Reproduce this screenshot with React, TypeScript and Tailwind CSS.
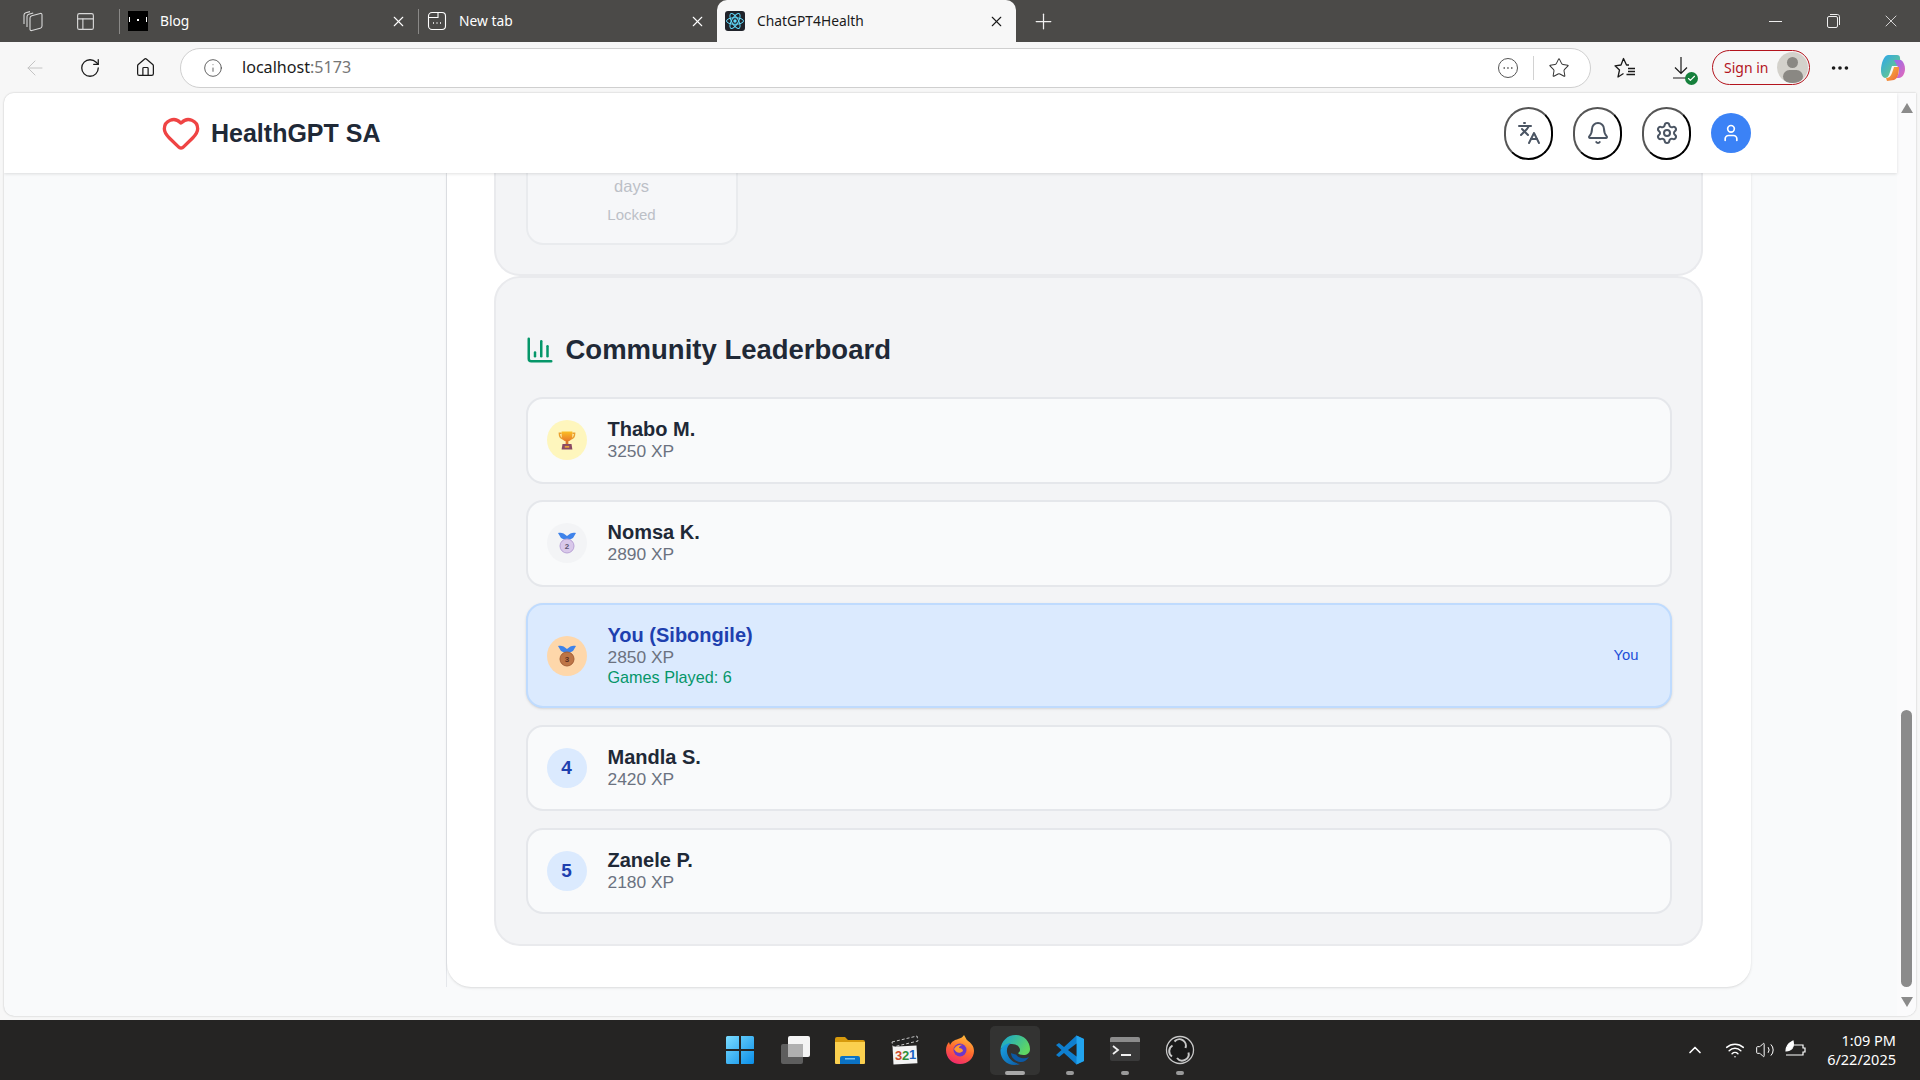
import React from "react";
import {
  ArrowLeft,
  Bell,
  ChartColumn,
  Check,
  ChevronUp,
  Ellipsis,
  Heart,
  Home,
  Info,
  Languages,
  PanelsTopLeft,
  Plus,
  RotateCw,
  Settings,
  Star,
  User,
  Volume2,
  Wifi,
  X,
} from "lucide-react";

interface LeaderRow {
  name: string;
  xp: number;
  badge: React.ReactNode;
  badgeBg: string;
  isYou?: boolean;
  games?: number;
}

function Trophy() {
  return (
    <svg width="18" height="21" viewBox="0 0 20 22">
      <defs>
        <linearGradient id="cup" x1="0" y1="0" x2="0" y2="1">
          <stop offset="0" stopColor="#fbbf24" />
          <stop offset="1" stopColor="#e8792b" />
        </linearGradient>
      </defs>
      <path d="M4 3H1.500C1.500 7 3 9 6 9.500M16 3h2.500C18.500 7 17 9 14 9.500" fill="none" stroke="#eaa02f" strokeWidth="1.600" />
      <path d="M4 1h12v5c0 4-3 6-6 6S4 10 4 6z" fill="url(#cup)" />
      <rect x="8.500" y="11" width="3" height="4" fill="#d9772b" />
      <path d="M5 15h10l1 6H4z" fill="#8a4a63" />
      <rect x="7.500" y="17" width="5" height="2" fill="#e8a13a" />
    </svg>
  );
}

function Medal({ fill, ring, digit, text }: { fill: string; ring: string; digit: string; text: string }) {
  return (
    <svg width="20" height="24" viewBox="0 0 20 24">
      <path d="M1 2c3-1 6 0 9 3 3-3 6-4 9-3l-3 5-6 3-6-3z" fill="#3f83ea" />
      <circle cx="10" cy="15" r="7" fill={fill} stroke={ring} strokeWidth="1" />
      <text x="10" y="18" textAnchor="middle" fontSize="8" fontWeight="700" fill={text}>
        {digit}
      </text>
    </svg>
  );
}

const rows: LeaderRow[] = [
  { name: "Thabo M.", xp: 3250, badge: <Trophy />, badgeBg: "bg-[#fef6bd]" },
  {
    name: "Nomsa K.",
    xp: 2890,
    badge: <Medal fill="#d9c8ea" ring="#b9a3d6" digit="2" text="#5b5470" />,
    badgeBg: "bg-[#f3f4f6]",
  },
  {
    name: "You (Sibongile)",
    xp: 2850,
    badge: <Medal fill="#bd7547" ring="#a55f36" digit="3" text="#5a2f22" />,
    badgeBg: "bg-[#fed7aa]",
    isYou: true,
    games: 6,
  },
  {
    name: "Mandla S.",
    xp: 2420,
    badge: <span className="text-[19px] font-bold text-[#1e40af]">4</span>,
    badgeBg: "bg-[#dbeafe]",
  },
  {
    name: "Zanele P.",
    xp: 2180,
    badge: <span className="text-[19px] font-bold text-[#1e40af]">5</span>,
    badgeBg: "bg-[#dbeafe]",
  },
];

function BrowserTab({
  icon,
  label,
  active,
}: {
  icon: React.ReactNode;
  label: string;
  active?: boolean;
}) {
  return (
    <div
      className={
        active
          ? "flex h-[48px] w-[299px] items-center self-start rounded-t-[10px] bg-[#f7f7f7] pb-[6px] pl-[8px] pr-[11px] text-[#1a1a1a]"
          : "flex h-[42px] w-[299px] items-center pr-[11px] text-white"
      }
    >
      {!active && <span className="mr-[8px] h-[25px] w-[1px] bg-[#8a8987]" />}
      {icon}
      <span className="ml-[12px] flex-1 text-[13.8px]">{label}</span>
      <X size={17} strokeWidth={1.5} />
    </div>
  );
}

function TabBar() {
  return (
    <div className="flex h-[42px] shrink-0 items-start bg-[#4b4a48]">
      <div className="flex h-[42px] w-[59px] items-center justify-center pl-[6px] text-[#d8d8d8]">
        <svg width="22" height="24" viewBox="0 0 22 24" fill="none" stroke="currentColor" strokeWidth="1.100">
          <path d="M2 15V6c0-1.200.7-2 1.800-2.300L8 2.600" />
          <path d="M5 18V7.500c0-1.200.7-2 1.800-2.300l4.400-1.200" />
          <path d="M8 9c0-1.200.7-2 1.800-2.300l8.400-2.200C19.300 4.200 20 4.800 20 6v11c0 1.200-.7 2-1.800 2.300l-8.400 2.200C8.700 21.800 8 21.200 8 20z" />
        </svg>
      </div>
      <div className="flex h-[42px] w-[52px] items-center justify-center text-[#d8d8d8]">
        <PanelsTopLeft size={21} strokeWidth={1.3} />
      </div>
      <div className="w-[8px]" />
      <BrowserTab
        label="Blog"
        icon={
          <div className="flex h-[20px] w-[20px] items-start justify-between bg-black px-[1px] pt-[6px]">
            <span className="h-[5px] w-[1px] bg-white" />
            <span className="mt-[2px] h-[2px] w-[2px] bg-white" />
            <span className="h-[5px] w-[1px] bg-white" />
          </div>
        }
      />
      <BrowserTab
        label="New tab"
        icon={
          <svg width="20" height="20" viewBox="0 0 20 20" fill="none" stroke="currentColor" strokeWidth="1.100">
            <rect x="1.500" y="1.500" width="17" height="17" rx="3.500" />
            <path d="M1.500 6.500h9.500V1.500" />
            <path d="M6 12h1M9.500 12h1M13 12h1" strokeWidth="1.500" />
          </svg>
        }
      />
      <BrowserTab
        active
        label="ChatGPT4Health"
        icon={
          <svg width="20" height="20" viewBox="0 0 20 20" className="rounded-[3px] bg-[#20232a]">
            <g fill="none" stroke="#61dafb" strokeWidth="1">
              <ellipse cx="10" cy="10" rx="8.500" ry="3.300" />
              <ellipse cx="10" cy="10" rx="8.500" ry="3.300" transform="rotate(60 10 10)" />
              <ellipse cx="10" cy="10" rx="8.500" ry="3.300" transform="rotate(120 10 10)" />
            </g>
            <circle cx="10" cy="10" r="1.700" fill="#61dafb" />
          </svg>
        }
      />
      <div className="flex h-[42px] w-[54px] items-center justify-center text-[#f0f0f0]">
        <Plus size={25} strokeWidth={1.2} />
      </div>
      <div className="ml-auto flex h-[42px] text-[#eeeeee]">
        <div className="flex w-[58px] items-center justify-center">
          <span className="h-[1px] w-[13px] bg-[#eeeeee]" />
        </div>
        <div className="flex w-[58px] items-center justify-center">
          <svg width="13" height="14" viewBox="0 0 13 14" fill="none" stroke="currentColor" strokeWidth="1">
            <rect x="0.500" y="2.500" width="10" height="11" rx="1.500" />
            <path d="M3 .500h7.500c1 0 2 1 2 2V11" />
          </svg>
        </div>
        <div className="flex w-[58px] items-center justify-center">
          <X size={20} strokeWidth={1} />
        </div>
      </div>
    </div>
  );
}

function Toolbar() {
  return (
    <div className="flex h-[51px] shrink-0 items-center bg-[#f7f7f7] text-[#1a1a1a]">
      <div className="flex w-[180px] items-center pl-[23px]">
        <ArrowLeft size={24} strokeWidth={1} className="text-[#c4c4c4]" />
        <RotateCw size={22} strokeWidth={1.4} className="ml-[32px]" />
        <Home size={21} strokeWidth={1.4} className="ml-[34px]" />
      </div>
      <div className="flex h-[40px] w-[1411px] items-center rounded-full border border-[#cfcfcf] bg-white pl-[22px] pr-[20px]">
        <Info size={20} strokeWidth={1} className="text-[#444]" />
        <span className="ml-[19px] text-[16.100px]">
          localhost<span className="text-[#767676]">:5173</span>
        </span>
        <svg width="22" height="22" viewBox="0 0 22 22" fill="none" stroke="#555" strokeWidth="1" className="ml-auto">
          <circle cx="11" cy="11" r="9.500" />
          <path d="M6.500 11h1.500M10.200 11h1.500M14 11h1.500" strokeWidth="1.500" />
        </svg>
        <span className="mx-[14px] h-[24px] w-[1px] bg-[#d2d2d2]" />
        <Star size={22} strokeWidth={1.1} className="text-[#333]" />
      </div>
      <svg width="24" height="24" viewBox="0 0 24 24" fill="none" stroke="#1a1a1a" strokeWidth="1.300" className="ml-[22px]">
        <path d="M16 9 13.500 9 10.500 2.500 8 9 2 9.800 6.500 14 5 21l5.500-3.500" strokeLinejoin="round" />
        <path d="M15 12.500h7M15 15.500h7M13.500 18.500h8.500" />
      </svg>
      <div className="relative ml-[32px] text-[#1a1a1a]">
        <svg width="24" height="26" viewBox="0 0 24 26" fill="none" stroke="currentColor" strokeWidth="1.200">
          <path d="M12 2v16M6 12.500l6 6 6-6M4 23h16" />
        </svg>
        <div className="absolute bottom-[-4px] right-[-5px] flex h-[13px] w-[13px] items-center justify-center rounded-full bg-[#16803c]">
          <Check size={9} strokeWidth={3} className="text-white" />
        </div>
      </div>
      <div className="ml-[19px] flex h-[35px] w-[98px] items-center justify-between rounded-full border border-[#b3141d] pl-[11px] pr-[1px]">
        <span className="text-[14px] text-[#b3141d]">Sign in</span>
        <div className="flex h-[31px] w-[31px] flex-col items-center overflow-hidden rounded-full bg-[#d3d1cb]">
          <span className="mt-[5px] h-[12px] w-[11px] rounded-full bg-[#8a8883]" />
          <span className="mt-[2px] h-[14px] w-[20px] rounded-full bg-[#8a8883]" />
        </div>
      </div>
      <Ellipsis size={22} strokeWidth={2} className="ml-[19px]" />
      <svg width="26" height="28" viewBox="0 0 26 28" className="ml-[29px]">
        <defs>
          <linearGradient id="copA" x1="0" y1="0" x2="1" y2="1">
            <stop offset="0" stopColor="#2aa6f0" />
            <stop offset="1" stopColor="#7dd36a" />
          </linearGradient>
          <linearGradient id="copB" x1="0" y1="0" x2="1" y2="1">
            <stop offset="0" stopColor="#8f6bf0" />
            <stop offset="1" stopColor="#e769b8" />
          </linearGradient>
          <linearGradient id="copC" x1="0" y1="0" x2="1" y2="1">
            <stop offset="0" stopColor="#f5c33b" />
            <stop offset="1" stopColor="#f0603c" />
          </linearGradient>
        </defs>
        <path d="M8 1h9c2 0 3 1 3 3l1 8H12L9 21c-1 2-2 3-4 3-3-1-4-4-4-8 0-6 3-15 7-15z" fill="url(#copA)" />
        <path d="M14 6h7c3 2 4 6 4 9 0 5-3 9-6 9h-3c2-2 3-5 3-9z" fill="url(#copB)" />
        <path d="M6 24c3 0 5-2 6-5l2-6h5c0 5-1 12-5 13l-7 1z" fill="url(#copC)" />
      </svg>
    </div>
  );
}

function CircleButton({ children }: { children: React.ReactNode }) {
  return (
    <button className="flex h-[53px] w-[49px] items-center justify-center rounded-full border-2 border-b-black border-l-[#555] border-r-black border-t-[#555] text-[#4b5563]">
      {children}
    </button>
  );
}

function AppHeader() {
  return (
    <header className="z-10 flex h-[80px] shrink-0 items-center justify-between bg-white pl-[157px] pr-[146px] shadow-[0_1px_3px_rgba(0,0,0,0.12)]">
      <div className="flex items-center">
        <Heart size={40} strokeWidth={2} className="text-[#ef4444]" />
        <h1 className="ml-[10px] mt-[1px] text-[25px] font-bold text-[#1f2937]">HealthGPT SA</h1>
      </div>
      <div className="flex items-center gap-[20px]">
        <CircleButton>
          <Languages size={24} strokeWidth={2} />
        </CircleButton>
        <CircleButton>
          <Bell size={24} strokeWidth={2} />
        </CircleButton>
        <CircleButton>
          <Settings size={24} strokeWidth={2} />
        </CircleButton>
        <div className="flex h-[40px] w-[40px] items-center justify-center rounded-full bg-[#3b82f6] text-white">
          <User size={20} strokeWidth={2} />
        </div>
      </div>
    </header>
  );
}

function Leaderboard() {
  return (
    <section className="rounded-[26px] border-2 border-[#e9eaed] bg-[#f3f4f6] px-[29.500px] pb-[30px] pt-[54px]">
      <div className="flex h-[36px] items-center">
        <ChartColumn size={30} strokeWidth={2} className="ml-[-1px] text-[#059669]" />
        <h2 className="ml-[11px] text-[27.5px] font-bold text-[#1f2937]">Community Leaderboard</h2>
      </div>
      <div className="mt-[29px] flex flex-col gap-[16.5px]">
        {rows.map((row) => (
          <div
            key={row.name}
            className={
              row.isYou
                ? "flex items-center rounded-[17px] border-2 border-[#bfdbfe] bg-[#dbeafe] py-[19px] pl-[19px] pr-[31px] shadow-sm"
                : "flex items-center rounded-[17px] border-2 border-[#e5e7eb] bg-[#f9fafb] py-[19.25px] pl-[19px] pr-[31px]"
            }
          >
            <div className={"flex h-[40px] w-[40px] shrink-0 items-center justify-center rounded-full " + row.badgeBg}>
              {row.badge}
            </div>
            <div className="ml-[21px] flex-1">
              <p className={row.isYou ? "text-[20px] font-bold leading-[22px] text-[#1e40af]" : "text-[20px] font-bold leading-[22px] text-[#1f2937]"}>
                {row.name}
              </p>
              <p className="text-[17.4px] leading-[22px] text-[#6b7280]">{row.xp} XP</p>
              {row.games && (
                <p className="text-[16.2px] leading-[19px] text-[#059669]">Games Played: {row.games}</p>
              )}
            </div>
            {row.isYou && <span className="text-[14.8px] text-[#1d4ed8]">You</span>}
          </div>
        ))}
      </div>
    </section>
  );
}

function Scrollbar() {
  return (
    <div className="flex w-[19px] shrink-0 flex-col items-center bg-[#fbfbfc] text-[#8b8b8b]">
      <svg width="12" height="10" viewBox="0 0 12 10" className="mt-[10px]" fill="currentColor">
        <path d="M6 0l6 10H0z" />
      </svg>
      <div className="mt-[597px] h-[277px] w-[11px] rounded-full bg-[#8b8b8b]" />
      <svg width="12" height="10" viewBox="0 0 12 10" className="mt-[10px]" fill="currentColor">
        <path d="M0 0h12L6 10z" />
      </svg>
    </div>
  );
}

function Page() {
  return (
    <div className="flex flex-1 bg-[#f7f7f7] px-[4px] pb-[4px]">
      <div className="flex flex-1 overflow-hidden rounded-b-[10px] rounded-tl-[10px] bg-[#f9fafb] shadow-[0_0_2px_rgba(0,0,0,0.25)]">
        <div className="flex flex-1 flex-col">
          <AppHeader />
          <div className="flex items-stretch">
            <div className="w-[443px] shrink-0 border-r border-[#e5e7eb]" />
            <main className="w-[1304px] rounded-b-[24px] bg-white pb-[41px] pl-[47px] pr-[48px] shadow-sm">
              <section className="h-[103px] rounded-b-[26px] border-x-2 border-b-2 border-[#e9eaed] bg-[#f3f4f6] px-[29.500px]">
                <div className="flex h-[72px] w-[212px] flex-col items-center rounded-b-[17px] border-x-2 border-b-2 border-[#e9ebee] bg-[#f6f7f9] text-[#bcc0c7]">
                  <span className="text-[16.500px] leading-[26px]">days</span>
                  <span className="mt-[6px] text-[15px] leading-[20px]">Locked</span>
                </div>
              </section>
              <Leaderboard />
            </main>
          </div>
        </div>
        <Scrollbar />
      </div>
    </div>
  );
}

function TaskIcon({ children, active, dot }: { children: React.ReactNode; active?: boolean; dot?: boolean }) {
  return (
    <div className="flex h-[60px] w-[55px] flex-col items-center justify-center">
      <div
        className={
          active
            ? "flex h-[49px] w-[50px] flex-col items-center rounded-[5px] bg-[#333332]"
            : "flex h-[49px] w-[50px] flex-col items-center"
        }
      >
        <div className="mt-[8px] flex h-[32px] items-center">{children}</div>
        {active && <span className="mt-[5px] h-[4px] w-[20px] rounded-full bg-[#a8a8a8]" />}
        {dot && <span className="mt-[5px] h-[4px] w-[8px] rounded-full bg-[#9a9a9a]" />}
      </div>
    </div>
  );
}

function Taskbar() {
  return (
    <div className="grid h-[60px] shrink-0 grid-cols-[1fr_auto_1fr] bg-[#252423] font-['Noto_Sans',sans-serif]">
      <div />
      <div className="flex">
        <TaskIcon>
          <svg width="30" height="30" viewBox="0 0 30 30">
            <defs>
              <linearGradient id="win" x1="0" y1="0" x2="1" y2="1">
                <stop offset="0" stopColor="#7bdcff" />
                <stop offset="1" stopColor="#0a8ee8" />
              </linearGradient>
            </defs>
            <path d="M1 2.500A1.500 1.500 0 0 1 2.500 1H14v13H1zM16 1h11.500A1.500 1.500 0 0 1 29 2.500V14H16zM1 16h13v13H2.500A1.500 1.500 0 0 1 1 27.500zM16 16h13v11.500a1.500 1.500 0 0 1-1.500 1.500H16z" fill="url(#win)" />
          </svg>
        </TaskIcon>
        <TaskIcon>
          <svg width="30" height="30" viewBox="0 0 30 30">
            <rect x="1" y="9" width="22" height="20" rx="2" fill="#5e5e5e" />
            <rect x="8" y="1" width="22" height="21" rx="2" fill="#f4f4f4" />
            <rect x="8" y="9" width="15" height="13" fill="#b0b0b0" />
          </svg>
        </TaskIcon>
        <TaskIcon>
          <svg width="30" height="30" viewBox="0 0 30 30">
            <path d="M0 4a2 2 0 0 1 2-2h8l3 3h15a2 2 0 0 1 2 2v4H0z" fill="#d79a0d" />
            <path d="M0 7h30v21a1 1 0 0 1-1 1H1a1 1 0 0 1-1-1z" fill="#fbd04f" />
            <path d="M5 29v-6a2 2 0 0 1 2-2h16a2 2 0 0 1 2 2v6z" fill="#0b72c4" />
            <rect x="10" y="23" width="10" height="1.500" fill="#7fc4f0" />
          </svg>
        </TaskIcon>
        <TaskIcon>
          <svg width="28" height="30" viewBox="0 0 28 30">
            <path d="M1 7 26 1l1 5L2 12z" fill="#222" stroke="#eee" strokeWidth="0.800" strokeDasharray="3 2" />
            <rect x="2" y="11" width="24" height="18" fill="#f4f4f4" transform="rotate(-3 14 20)" />
            <text x="4" y="25" fontSize="13" fontWeight="700" fill="#d14b2a" fontFamily="Liberation Sans">3</text>
            <text x="11" y="25" fontSize="13" fontWeight="700" fill="#2f8f3a" fontFamily="Liberation Sans">2</text>
            <text x="18" y="24" fontSize="13" fontWeight="700" fill="#1b64c4" fontFamily="Liberation Sans">1</text>
          </svg>
        </TaskIcon>
        <TaskIcon>
          <svg width="30" height="30" viewBox="0 0 30 30">
            <defs>
              <linearGradient id="fx" x1="0.700" y1="0" x2="0.300" y2="1">
                <stop offset="0" stopColor="#ffbd3a" />
                <stop offset="0.500" stopColor="#ff6a2e" />
                <stop offset="1" stopColor="#f0266f" />
              </linearGradient>
            </defs>
            <path d="M19 0c2 3 2 4 3 5 4 3 7 6 7 11 0 7-6 13-14 13S1 23 1 15c0-3 1-6 3-8l1 3c2-4 5-5 8-6 3-1 5-2 6-4z" fill="url(#fx)" />
            <circle cx="15" cy="15" r="6.500" fill="#6c37c9" />
            <path d="M9 14c2-4 6-5 9-4-3 0-4 2-4 3 2 0 4 1 4 3-3 3-7 2-9-2z" fill="#ff9a2e" />
          </svg>
        </TaskIcon>
        <TaskIcon active>
          <svg width="30" height="30" viewBox="0 0 30 30">
            <defs>
              <linearGradient id="eg1" x1="0" y1="0" x2="1" y2="0.500">
                <stop offset="0" stopColor="#12a0d8" />
                <stop offset="1" stopColor="#5fd663" />
              </linearGradient>
              <linearGradient id="eg2" x1="0" y1="0" x2="1" y2="1">
                <stop offset="0" stopColor="#1aa6e4" />
                <stop offset="1" stopColor="#0c5aa6" />
              </linearGradient>
            </defs>
            <path d="M0.500 15C1 6 7.500 0 15.500 0 24 0 30 6.500 30 14c0 4-3 6-6.500 6-3 0-5-1-5.500-2 2-1 2.500-3 1.500-5-1.500-3-5-4.500-9-4-4 .5-8 3-10.500 6z" fill="url(#eg1)" />
            <path d="M0.500 15C3 10 7 8 11 8c-3 2-4.500 5-4 9 .8 6 6 11 13 12-2 .8-4 1-5.500 1C6.500 30 0 23.500.500 15z" fill="url(#eg2)" />
            <path d="M11 18c0 5 5 9 10 9 3 0 6-2 8-5-2 1-4 1.500-6 1.200-5-.5-6.500-3-7-3.700-2-.5-4-1-5-1.500z" fill="#0c59a4" />
          </svg>
        </TaskIcon>
        <TaskIcon dot>
          <svg width="30" height="30" viewBox="0 0 30 30">
            <path d="M21.500 0.500 29 4v22l-7.500 3.500L9 18l-5 4-3-2 5.500-5L1 10l3-2 5 4z" fill="#0f7fcf" />
            <path d="M21.500 0.500 29 4v22l-7.500 3.500z" fill="#22a4ee" />
            <path d="M21.500 8.500v13L13 15z" fill="#252423" />
          </svg>
        </TaskIcon>
        <TaskIcon dot>
          <svg width="30" height="26" viewBox="0 0 30 26">
            <rect x="0" y="0" width="30" height="24" rx="2" fill="#3a3a3a" />
            <path d="M0 2a2 2 0 0 1 2-2h26a2 2 0 0 1 2 2v3H0z" fill="#8c8c8c" />
            <path d="M3 9l5 4-5 4" stroke="#f0f0f0" strokeWidth="1.800" fill="none" />
            <path d="M11 18h10" stroke="#f0f0f0" strokeWidth="2" />
          </svg>
        </TaskIcon>
        <TaskIcon dot>
          <svg width="30" height="30" viewBox="0 0 30 30">
            <circle cx="15" cy="15" r="13.500" fill="#1a1a1a" stroke="#c8c8c8" strokeWidth="1.300" />
            <g fill="none" stroke="#c8c8c8" strokeWidth="2">
              <path d="M9.500 6.500a6.500 6.500 0 0 1 11 6.500" />
              <path d="M23.500 17.500a6.500 6.500 0 0 1-11.500 5.500" />
              <path d="M7 21.500a6.500 6.500 0 0 1 .5-11" />
            </g>
          </svg>
        </TaskIcon>
      </div>
      <div className="flex items-center justify-end pr-[24px] text-white">
        <ChevronUp size={20} strokeWidth={2} className="mr-[20px]" />
        <Wifi size={20} strokeWidth={1.8} className="mr-[10px]" />
        <Volume2 size={20} strokeWidth={1.2} className="mr-[10px]" />
        <svg width="22" height="20" viewBox="0 0 22 20" fill="none" stroke="currentColor" strokeWidth="1.200" className="mr-[20px]">
          <path d="M3 5h15v3h2v4h-2v3H1" />
          <path d="M1 11c0-4 3-8 7-10 1 4 0 8-3 9-1 .5-2 1-4 1z" fill="currentColor" />
        </svg>
        <div className="flex flex-col items-end text-[14.500px] leading-[19px]">
          <span>1:09 PM</span>
          <span>6/22/2025</span>
        </div>
      </div>
    </div>
  );
}

export default function App() {
  return (
    <div className="flex h-screen w-screen flex-col overflow-hidden font-['Liberation_Sans',Arial,sans-serif]">
      <div className="contents font-['Noto_Sans',sans-serif]">
        <TabBar />
        <Toolbar />
      </div>
      <Page />
      <Taskbar />
    </div>
  );
}
